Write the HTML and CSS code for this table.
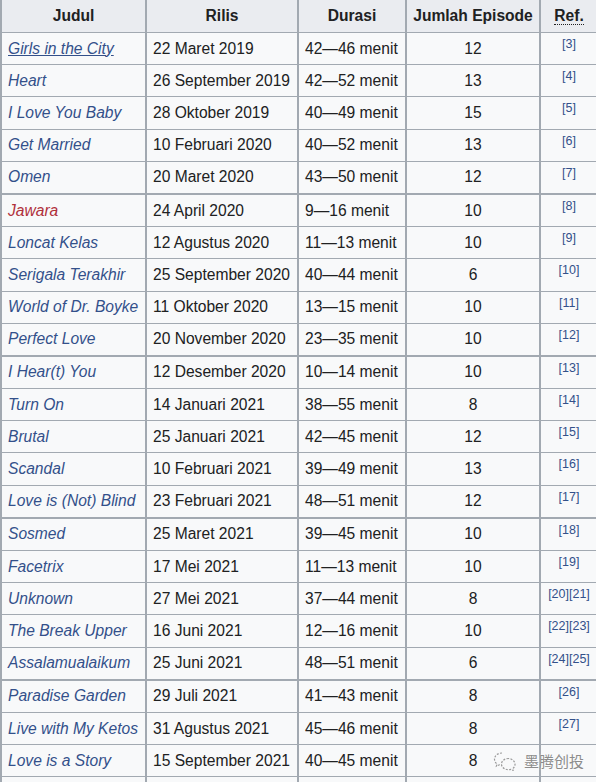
FILE: index.html
```html
<!DOCTYPE html>
<html lang="id">
<head>
<meta charset="utf-8">
<title>Daftar serial</title>
<link rel="stylesheet" href="styles.css">
</head>
<body>
<div class="wrap">
<table class="wikitable">
<colgroup>
<col class="c1"><col class="c2"><col class="c3"><col class="c4"><col class="c5">
</colgroup>
<thead>
<tr><th>Judul</th><th>Rilis</th><th>Durasi</th><th>Jumlah Episode</th><th><abbr class="ref-abbr" title="Referensi">Ref.</abbr></th></tr>
</thead>
<tbody>
<tr><td><a class="link hover" href="#">Girls in the City</a></td><td>22 Maret 2019</td><td>42—46 menit</td><td class="num">12</td><td class="ref"><sup>[3]</sup></td></tr>
<tr><td><a class="link" href="#">Heart</a></td><td>26 September 2019</td><td>42—52 menit</td><td class="num">13</td><td class="ref"><sup>[4]</sup></td></tr>
<tr><td><a class="link" href="#">I Love You Baby</a></td><td>28 Oktober 2019</td><td>40—49 menit</td><td class="num">15</td><td class="ref"><sup>[5]</sup></td></tr>
<tr><td><a class="link" href="#">Get Married</a></td><td>10 Februari 2020</td><td>40—52 menit</td><td class="num">13</td><td class="ref"><sup>[6]</sup></td></tr>
<tr><td><a class="link" href="#">Omen</a></td><td>20 Maret 2020</td><td>43—50 menit</td><td class="num">12</td><td class="ref"><sup>[7]</sup></td></tr>
<tr class="group"><td><a class="link new" href="#">Jawara</a></td><td>24 April 2020</td><td>9—16 menit</td><td class="num">10</td><td class="ref"><sup>[8]</sup></td></tr>
<tr><td><a class="link" href="#">Loncat Kelas</a></td><td>12 Agustus 2020</td><td>11—13 menit</td><td class="num">10</td><td class="ref"><sup>[9]</sup></td></tr>
<tr><td><a class="link" href="#">Serigala Terakhir</a></td><td>25 September 2020</td><td>40—44 menit</td><td class="num">6</td><td class="ref"><sup>[10]</sup></td></tr>
<tr><td><a class="link" href="#">World of Dr. Boyke</a></td><td>11 Oktober 2020</td><td>13—15 menit</td><td class="num">10</td><td class="ref"><sup>[11]</sup></td></tr>
<tr><td><a class="link" href="#">Perfect Love</a></td><td>20 November 2020</td><td>23—35 menit</td><td class="num">10</td><td class="ref"><sup>[12]</sup></td></tr>
<tr class="group"><td><a class="link" href="#">I Hear(t) You</a></td><td>12 Desember 2020</td><td>10—14 menit</td><td class="num">10</td><td class="ref"><sup>[13]</sup></td></tr>
<tr><td><a class="link" href="#">Turn On</a></td><td>14 Januari 2021</td><td>38—55 menit</td><td class="num">8</td><td class="ref"><sup>[14]</sup></td></tr>
<tr><td><a class="link" href="#">Brutal</a></td><td>25 Januari 2021</td><td>42—45 menit</td><td class="num">12</td><td class="ref"><sup>[15]</sup></td></tr>
<tr><td><a class="link" href="#">Scandal</a></td><td>10 Februari 2021</td><td>39—49 menit</td><td class="num">13</td><td class="ref"><sup>[16]</sup></td></tr>
<tr><td><a class="link" href="#">Love is (Not) Blind</a></td><td>23 Februari 2021</td><td>48—51 menit</td><td class="num">12</td><td class="ref"><sup>[17]</sup></td></tr>
<tr class="group"><td><a class="link" href="#">Sosmed</a></td><td>25 Maret 2021</td><td>39—45 menit</td><td class="num">10</td><td class="ref"><sup>[18]</sup></td></tr>
<tr><td><a class="link" href="#">Facetrix</a></td><td>17 Mei 2021</td><td>11—13 menit</td><td class="num">10</td><td class="ref"><sup>[19]</sup></td></tr>
<tr><td><a class="link" href="#">Unknown</a></td><td>27 Mei 2021</td><td>37—44 menit</td><td class="num">8</td><td class="ref"><sup>[20][21]</sup></td></tr>
<tr><td><a class="link" href="#">The Break Upper</a></td><td>16 Juni 2021</td><td>12—16 menit</td><td class="num">10</td><td class="ref"><sup>[22][23]</sup></td></tr>
<tr><td><a class="link" href="#">Assalamualaikum</a></td><td>25 Juni 2021</td><td>48—51 menit</td><td class="num">6</td><td class="ref"><sup>[24][25]</sup></td></tr>
<tr class="group"><td><a class="link" href="#">Paradise Garden</a></td><td>29 Juli 2021</td><td>41—43 menit</td><td class="num">8</td><td class="ref"><sup>[26]</sup></td></tr>
<tr><td><a class="link" href="#">Live with My Ketos</a></td><td>31 Agustus 2021</td><td>45—46 menit</td><td class="num">8</td><td class="ref"><sup>[27]</sup></td></tr>
<tr><td><a class="link" href="#">Love is a Story</a></td><td>15 September 2021</td><td>40—45 menit</td><td class="num">8</td><td class="ref"></td></tr>
<tr><td>&nbsp;</td><td>&nbsp;</td><td>&nbsp;</td><td class="num">&nbsp;</td><td class="ref">&nbsp;</td></tr>
</tbody>
</table>
<div class="watermark">
<svg class="wm-icon" width="24" height="20" viewBox="0 0 24 20" aria-hidden="true">
<path d="M9 2C4.6 2 1.5 4.8 1.5 8.2c0 1.9 1 3.6 2.6 4.7l-.7 2.3 2.8-1.4c.9.3 1.8.4 2.8.4" fill="none" stroke="#9a9a9a" stroke-width="1.2" stroke-dasharray="2 1.4"/>
<path d="M15.5 7.5c-3.9 0-7 2.5-7 5.6s3.1 5.6 7 5.6c.8 0 1.6-.1 2.3-.3l2.3 1.2-.6-1.9c1.5-1 2.5-2.6 2.5-4.3 0-3.3-3.1-5.9-6.5-5.9z" fill="none" stroke="#9a9a9a" stroke-width="1.2" stroke-dasharray="2 1.4"/>
</svg>
<span class="wm-text">墨腾创投</span>
</div>
</div>
</body>
</html>
```

FILE: styles.css
```css
html, body {
  margin: 0;
  padding: 0;
  background: #ffffff;
}

.wrap {
  position: relative;
  width: 596px;
  overflow: hidden;
}

.wikitable {
  border-collapse: collapse;
  table-layout: fixed;
  width: 597px;
  background: #f8f9fa;
  color: #202122;
  font-family: "Liberation Sans", Arial, sans-serif;
  font-size: 15.6px;
}

.c1 { width: 145px; }
.c2 { width: 152px; }
.c3 { width: 108px; }
.c4 { width: 134px; }
.c5 { width: 58px; }

.wikitable th,
.wikitable td {
  border-style: solid;
  border-color: #a2a9b1;
  border-width: 1px 2px;
  padding: 0 6px;
  white-space: nowrap;
  overflow: hidden;
}

.wikitable th {
  background: #eaecf0;
  font-weight: bold;
  text-align: center;
  height: 32px;
  border-top-width: 0;
}

.wikitable td {
  height: 31.2px;
  text-align: left;
  vertical-align: middle;
}

.wikitable tr.group td {
  border-top-width: 2px;
}

.wikitable td.num {
  text-align: center;
}

.wikitable td.ref {
  text-align: center;
  vertical-align: top;
  padding: 0 2px;
}

.wikitable sup {
  font-size: 12.5px;
  line-height: 1;
  position: relative;
  top: 5px;
  vertical-align: top;
  color: #33508a;
}

.ref-abbr {
  text-decoration: none;
  border-bottom: 1px dotted #202122;
  cursor: help;
}

.link {
  color: #33508a;
  font-style: italic;
  text-decoration: none;
}

.link.hover {
  text-decoration: underline;
}

.link.new {
  color: #b0303a;
}

.watermark {
  position: absolute;
  left: 493px;
  top: 750px;
  display: flex;
  align-items: center;
  gap: 7px;
  pointer-events: none;
}

.wm-text {
  font-family: "Noto Sans CJK SC", sans-serif;
  font-size: 15px;
  color: #8c8c8c;
  text-shadow: 0 0 2px #ffffff;
}
```
